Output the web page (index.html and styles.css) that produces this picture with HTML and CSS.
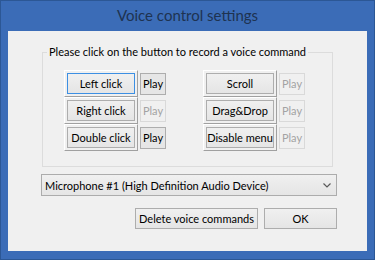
FILE: index.html
```html
<!DOCTYPE html>
<html lang="en">
  <head>
    <meta charset="UTF-8" />
    <title>Voice control settings</title>
    <link rel="stylesheet" href="styles.css">
  </head>
  <body>
    <div class="window">
      <div class="titlebar">Voice control settings</div>
      <div class="client">
        <fieldset class="group">
          <legend>Please click on the button to record a voice command</legend>
          <div class="commands">
            <div class="column">
              <div class="row">
                <div class="cell"><button class="btn focused">Left click</button></div>
                <button class="play">Play</button>
              </div>
              <div class="row">
                <div class="cell"><button class="btn">Right click</button></div>
                <button class="play" disabled>Play</button>
              </div>
              <div class="row">
                <div class="cell"><button class="btn">Double click</button></div>
                <button class="play">Play</button>
              </div>
            </div>
            <div class="column">
              <div class="row">
                <div class="cell"><button class="btn">Scroll</button></div>
                <button class="play" disabled>Play</button>
              </div>
              <div class="row">
                <div class="cell"><button class="btn">Drag&amp;Drop</button></div>
                <button class="play" disabled>Play</button>
              </div>
              <div class="row">
                <div class="cell"><button class="btn">Disable menu</button></div>
                <button class="play" disabled>Play</button>
              </div>
            </div>
          </div>
        </fieldset>

        <div class="select">
          <span>Microphone #1 (High Definition Audio Device)</span>
          <svg class="chevron" width="8" height="5" viewBox="0 0 8 5">
            <polyline points="0.5,0.5 4,4 7.5,0.5" fill="none" stroke="#5a5a5a" stroke-width="1.2" />
          </svg>
        </div>

        <div class="actions">
          <button class="btn delete">Delete voice commands</button>
          <button class="btn ok">OK</button>
        </div>
      </div>
    </div>
  </body>
</html>
```

FILE: styles.css
```css
body {
  margin: 0;
  font-family: Lato, "Noto Sans", sans-serif;
  font-size: 11px;
  color: #000;
}

.window {
  width: 375px;
  height: 260px;
  box-sizing: border-box;
  display: flex;
  flex-direction: column;
  padding: 0 7px 8px;
  background: #3b6cb7;
  border: 1px solid #2c5795;
}

.titlebar {
  height: 30px;
  line-height: 29px;
  text-align: center;
  font-size: 15px;
  color: #1e3351;
}

.client {
  flex: 1;
  background: #f0f0f0;
}

button,
legend,
.select span {
  white-space: nowrap;
}

.group {
  margin: 13px 34px 0;
  padding: 10px 0 15px;
  border: 1px solid #dcdcdc;
  min-width: 0;
}

.group legend {
  margin-left: 4px;
  padding: 0 2px;
  line-height: 16px;
}

.commands {
  display: flex;
  gap: 37px;
  margin-left: 21px;
}

.row {
  display: flex;
  align-items: center;
  gap: 2px;
}

.cell {
  padding: 2px;
  border: 1px solid;
  border-color: #fff #a0a0a0 #a0a0a0 #fff;
}

.btn {
  display: block;
  height: 21px;
  padding: 0;
  font: inherit;
  color: #000;
  border: 1px solid #adadad;
  background: linear-gradient(#f0f0f0, #e5e5e5);
}

.cell .btn {
  width: 68px;
}

.btn.focused {
  border-color: #3c8fe3;
}

.play {
  width: 26px;
  height: 22px;
  padding: 0;
  font: inherit;
  color: #000;
  border: 1px solid #adadad;
  background: #e6e6e6;
}

.play:disabled {
  color: #a3a3a3;
  border-color: #d9d9d9;
  background: #f0f0f0;
}

.select {
  display: flex;
  align-items: center;
  justify-content: space-between;
  height: 22px;
  box-sizing: border-box;
  margin: 7px 30px 0 33px;
  padding: 0 5px 0 3px;
  border: 1px solid #acacac;
  background: linear-gradient(#f0f0f0, #e5e5e5);
}

.actions {
  display: flex;
  justify-content: flex-end;
  gap: 6px;
  margin: 12px 30px 0 0;
}

.delete {
  width: 123px;
}

.ok {
  width: 73px;
}
```
